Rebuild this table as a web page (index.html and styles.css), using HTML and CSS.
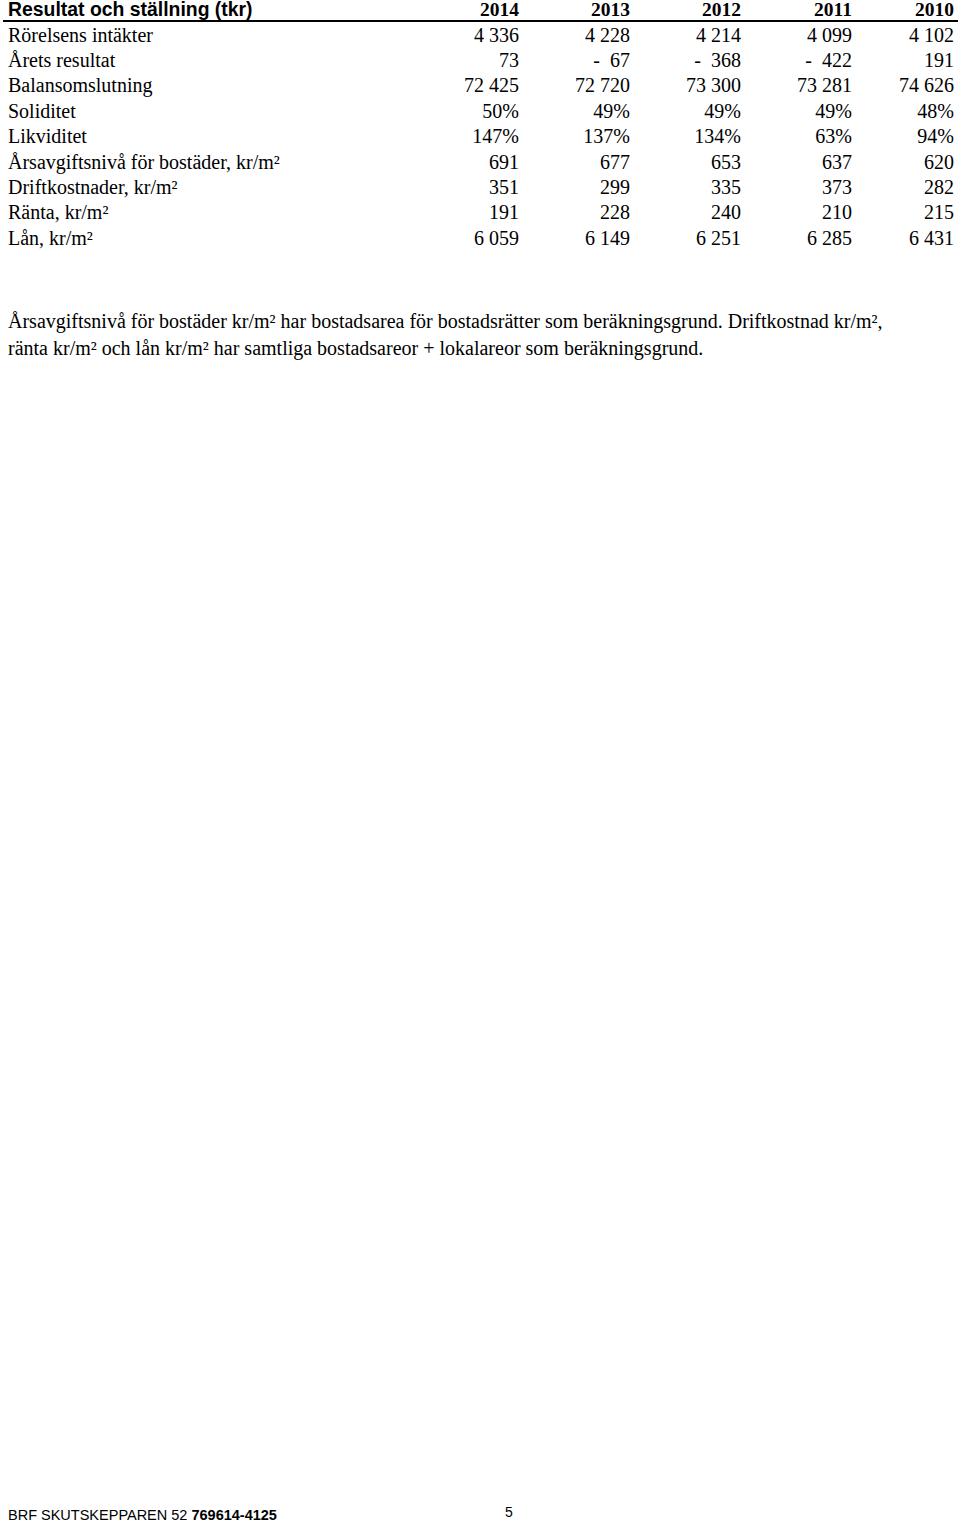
FILE: index.html
```html
<!DOCTYPE html>
<html lang="sv">
<head>
<meta charset="utf-8">
<link rel="stylesheet" href="styles.css">
</head>
<body>
<div class="page">
  <div class="table">
    <div class="row head">
      <div class="label title">Resultat och ställning (tkr)</div>
      <div class="num year">2014</div>
      <div class="num year">2013</div>
      <div class="num year">2012</div>
      <div class="num year">2011</div>
      <div class="num year">2010</div>
    </div>
    <div class="row"><div class="label">Rörelsens intäkter</div><div class="num">4 336</div><div class="num">4 228</div><div class="num">4 214</div><div class="num">4 099</div><div class="num">4 102</div></div>
    <div class="row"><div class="label">Årets resultat</div><div class="num">73</div><div class="num">-&nbsp; 67</div><div class="num">-&nbsp; 368</div><div class="num">-&nbsp; 422</div><div class="num">191</div></div>
    <div class="row"><div class="label">Balansomslutning</div><div class="num">72 425</div><div class="num">72 720</div><div class="num">73 300</div><div class="num">73 281</div><div class="num">74 626</div></div>
    <div class="row"><div class="label">Soliditet</div><div class="num">50%</div><div class="num">49%</div><div class="num">49%</div><div class="num">49%</div><div class="num">48%</div></div>
    <div class="row"><div class="label">Likviditet</div><div class="num">147%</div><div class="num">137%</div><div class="num">134%</div><div class="num">63%</div><div class="num">94%</div></div>
    <div class="row"><div class="label">Årsavgiftsnivå för bostäder, kr/m²</div><div class="num">691</div><div class="num">677</div><div class="num">653</div><div class="num">637</div><div class="num">620</div></div>
    <div class="row"><div class="label">Driftkostnader, kr/m²</div><div class="num">351</div><div class="num">299</div><div class="num">335</div><div class="num">373</div><div class="num">282</div></div>
    <div class="row"><div class="label">Ränta, kr/m²</div><div class="num">191</div><div class="num">228</div><div class="num">240</div><div class="num">210</div><div class="num">215</div></div>
    <div class="row"><div class="label">Lån, kr/m²</div><div class="num">6 059</div><div class="num">6 149</div><div class="num">6 251</div><div class="num">6 285</div><div class="num">6 431</div></div>
  </div>
  <p class="note">Årsavgiftsnivå för bostäder kr/m² har bostadsarea för bostadsrätter som beräkningsgrund. Driftkostnad kr/m², ränta kr/m² och lån kr/m² har samtliga bostadsareor + lokalareor som beräkningsgrund.</p>
  <div class="footer">
    <div class="org">BRF SKUTSKEPPAREN 52 <b>769614-4125</b></div>
    <div class="pageno">5</div>
  </div>
</div>
</body>
</html>
```
FILE: styles.css
```css
html, body {
  margin: 0;
  padding: 0;
  background: #fff;
  color: #000;
}
.page {
  min-height: 1523px;
  display: flex;
  flex-direction: column;
  box-sizing: border-box;
  font-family: "Liberation Serif", "Times New Roman", serif;
  font-size: 20px;
}
.table {
  margin-left: 3px;
  width: 955px;
}
.row {
  display: grid;
  grid-template-columns: 405px 111px 111px 111px 111px 102px;
  height: 25.4px;
  align-items: center;
  line-height: 1;
}
.row.head {
  align-items: end;
  border-bottom: 2px solid #000;
  padding-bottom: 2px;
  box-sizing: border-box;
  height: 22px;
}
.label {
  padding-left: 5px;
  white-space: nowrap;
}
.title {
  font-family: "Liberation Sans", Arial, sans-serif;
  font-weight: bold;
  font-size: 19.4px;
}
.num {
  text-align: right;
  white-space: nowrap;
}
.year {
  font-weight: bold;
  font-size: 19.5px;
}
.note {
  margin: 57px 0 0 8px;
  width: 880px;
  line-height: 27px;
  font-size: 20px;
}
.footer {
  margin-top: auto;
  height: 16px;
  display: flex;
  align-items: flex-start;
  font-family: "Liberation Sans", Arial, sans-serif;
  font-size: 14.5px;
}
.org {
  margin-left: 8px;
  width: 497px;
}
.pageno {
  font-size: 14px;
  margin-top: -3px;
}
```
